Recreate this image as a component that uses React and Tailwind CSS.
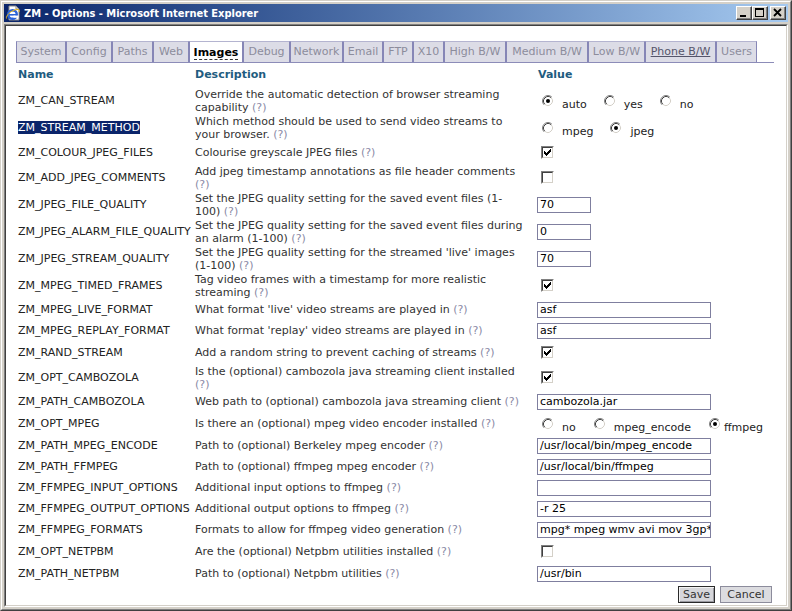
import React from 'react';

const F = "font-['DejaVu_Sans',Verdana,sans-serif]";

const tabs = [
  ['System', 'w-[50px]'],
  ['Config', 'w-[46px]'],
  ['Paths', 'w-[41px]'],
  ['Web', 'w-[36px]'],
  ['Images', 'w-[54px]', 'active'],
  ['Debug', 'w-[47px]'],
  ['Network', 'w-[53px]'],
  ['Email', 'w-[40px]'],
  ['FTP', 'w-[30px]'],
  ['X10', 'w-[31px]'],
  ['High B/W', 'w-[62px]'],
  ['Medium B/W', 'w-[82px]'],
  ['Low B/W', 'w-[57px]'],
  ['Phone B/W', 'w-[71px]', 'hover'],
  ['Users', 'w-[41px]'],
];

const rows = [
  { name: 'ZM_CAN_STREAM', h: 'h-[27px]', desc: ['Override the automatic detection of browser streaming', 'capability'], v: { t: 'radio', o: ['auto', 'yes', 'no'], s: 0 } },
  { name: 'ZM_STREAM_METHOD', sel: true, h: 'h-[27px]', desc: ['Which method should be used to send video streams to', 'your browser.'], v: { t: 'radio', o: ['mpeg', 'jpeg'], s: 1 } },
  { name: 'ZM_COLOUR_JPEG_FILES', h: 'h-[23px]', desc: ['Colourise greyscale JPEG files'], v: { t: 'check', on: true } },
  { name: 'ZM_ADD_JPEG_COMMENTS', h: 'h-[27px]', desc: ['Add jpeg timestamp annotations as file header comments', ''], v: { t: 'check', on: false } },
  { name: 'ZM_JPEG_FILE_QUALITY', h: 'h-[27px]', desc: ['Set the JPEG quality setting for the saved event files (1-', '100)'], v: { t: 'text', val: '70' } },
  { name: 'ZM_JPEG_ALARM_FILE_QUALITY', h: 'h-[27px]', desc: ['Set the JPEG quality setting for the saved event files during', 'an alarm (1-100)'], v: { t: 'text', val: '0' } },
  { name: 'ZM_JPEG_STREAM_QUALITY', h: 'h-[27px]', desc: ["Set the JPEG quality setting for the streamed 'live' images", '(1-100)'], v: { t: 'text', val: '70' } },
  { name: 'ZM_MPEG_TIMED_FRAMES', h: 'h-[27px]', desc: ['Tag video frames with a timestamp for more realistic', 'streaming'], v: { t: 'check', on: true } },
  { name: 'ZM_MPEG_LIVE_FORMAT', h: 'h-[21px]', desc: ["What format 'live' video streams are played in"], v: { t: 'wide', val: 'asf' } },
  { name: 'ZM_MPEG_REPLAY_FORMAT', h: 'h-[21px]', desc: ["What format 'replay' video streams are played in"], v: { t: 'wide', val: 'asf' } },
  { name: 'ZM_RAND_STREAM', h: 'h-[23px]', desc: ['Add a random string to prevent caching of streams'], v: { t: 'check', on: true } },
  { name: 'ZM_OPT_CAMBOZOLA', h: 'h-[27px]', desc: ['Is the (optional) cambozola java streaming client installed', ''], v: { t: 'check', on: true } },
  { name: 'ZM_PATH_CAMBOZOLA', h: 'h-[21px]', desc: ['Web path to (optional) cambozola java streaming client'], v: { t: 'wide', val: 'cambozola.jar' } },
  { name: 'ZM_OPT_MPEG', h: 'h-[23px]', desc: ['Is there an (optional) mpeg video encoder installed'], v: { t: 'radio', o: ['no', 'mpeg_encode', 'ffmpeg'], s: 2, tight: true } },
  { name: 'ZM_PATH_MPEG_ENCODE', h: 'h-[21px]', desc: ['Path to (optional) Berkeley mpeg encoder'], v: { t: 'wide', val: '/usr/local/bin/mpeg_encode' } },
  { name: 'ZM_PATH_FFMPEG', h: 'h-[21px]', desc: ['Path to (optional) ffmpeg mpeg encoder'], v: { t: 'wide', val: '/usr/local/bin/ffmpeg' } },
  { name: 'ZM_FFMPEG_INPUT_OPTIONS', h: 'h-[21px]', desc: ['Additional input options to ffmpeg'], v: { t: 'wide', val: '' } },
  { name: 'ZM_FFMPEG_OUTPUT_OPTIONS', h: 'h-[21px]', desc: ['Additional output options to ffmpeg'], v: { t: 'wide', val: '-r 25' } },
  { name: 'ZM_FFMPEG_FORMATS', h: 'h-[21px]', desc: ['Formats to allow for ffmpeg video generation'], v: { t: 'wide', val: 'mpg* mpeg wmv avi mov 3gp*' } },
  { name: 'ZM_OPT_NETPBM', h: 'h-[23px]', desc: ['Are the (optional) Netpbm utilities installed'], v: { t: 'check', on: false } },
  { name: 'ZM_PATH_NETPBM', h: 'h-[21px]', desc: ['Path to (optional) Netpbm utilities'], v: { t: 'wide', val: '/usr/bin' } },
];

function Radio({ on }) {
  return (
    <svg width="12" height="12" viewBox="0 0 12 12" className="shrink-0 mb-[3px]">
      <circle cx="6" cy="6" r="5" fill="#ffffff" />
      <path d="M2.11 9.89 A5.5 5.5 0 0 1 9.89 2.11" fill="none" stroke="#808080" />
      <path d="M9.89 2.11 A5.5 5.5 0 0 1 2.11 9.89" fill="none" stroke="#ffffff" />
      <path d="M2.82 9.18 A4.5 4.5 0 0 1 9.18 2.82" fill="none" stroke="#404040" />
      <path d="M9.18 2.82 A4.5 4.5 0 0 1 2.82 9.18" fill="none" stroke="#d4d0c8" />
      {on && <circle cx="6" cy="6" r="2" fill="#000000" />}
    </svg>
  );
}

function Check({ on }) {
  return (
    <div className="ml-[5px] w-[13px] h-[13px] border border-t-[#808080] border-l-[#808080] border-r-white border-b-white">
      <div className="w-full h-full border border-t-[#404040] border-l-[#404040] border-r-[#d4d0c8] border-b-[#d4d0c8] bg-white flex items-center justify-center">
        {on && (
          <svg width="7" height="7" viewBox="0 0 7 7" shapeRendering="crispEdges">
            <path
              d="M6 0h1v1h-1z M5 1h2v1h-2z M0 2h1v1h-1z M4 2h3v1h-3z M0 3h2v1h-2z M3 3h3v1h-3z M0 4h5v1h-5z M1 5h3v1h-3z M2 6h1v1h-1z"
              fill="#000000"
            />
          </svg>
        )}
      </div>
    </div>
  );
}

function TextIn({ val, wide }) {
  return (
    <div
      className={`${wide ? 'w-[174px]' : 'w-[54px]'} h-[16px] ml-[1px] border border-[#7f7f9f] bg-white px-[2px] text-[11px] leading-[14px] text-black whitespace-nowrap overflow-hidden`}
    >
      {val}
    </div>
  );
}

function Value({ v }) {
  if (v.t === 'check') return <Check on={v.on} />;
  if (v.t === 'text') return <TextIn val={v.val} />;
  if (v.t === 'wide') return <TextIn val={v.val} wide />;
  return (
    <div className="flex items-center pt-[4px] pl-[6px]">
      {v.o.map((o, i) => {
        const last = i === v.o.length - 1;
        return (
          <div key={o} className="flex items-center">
            <Radio on={v.s === i} />
            <span
              className={`${v.tight && last ? 'ml-[3px]' : 'ml-[8px]'} ${last ? '' : v.tight ? 'mr-[18px]' : 'mr-[17px]'} mt-[3px] leading-[13px] text-[#222]`}
            >
              {o}
            </span>
          </div>
        );
      })}
    </div>
  );
}

function IEIcon() {
  return (
    <svg width="16" height="16" viewBox="0 0 16 16">
      <path d="M4 1 H11 L14 4 V15 H4 Z" fill="#ffffff" stroke="#8c8c8c" strokeWidth="1" />
      <path d="M11 1 V4 H14" fill="none" stroke="#8c8c8c" strokeWidth="1" />
      <circle cx="7.5" cy="9.5" r="4.3" fill="none" stroke="#2a63d8" strokeWidth="2.4" />
      <rect x="3.5" y="9" width="8.5" height="1.6" fill="#2a63d8" />
      <rect x="8.5" y="10.6" width="5" height="2.2" fill="#ffffff" />
      <path d="M1.5 13.5 C 0.5 11 6 5 12 4.5 C 14.5 4.3 15 5.5 13.8 7" fill="none" stroke="#e8b418" strokeWidth="1" />
    </svg>
  );
}

function TitleBtn({ kind }) {
  return (
    <div className="w-[16px] h-[14px] bg-[#d4d0c8] border border-t-white border-l-white border-r-[#404040] border-b-[#404040] shadow-[inset_-1px_-1px_0_#808080] flex items-center justify-center">
      <svg width="14" height="12" viewBox="0 0 14 12" shapeRendering="crispEdges">
        {kind === 'min' && <rect x="3" y="8" width="6" height="2" fill="#000" />}
        {kind === 'max' && (
          <g fill="#000">
            <rect x="2" y="1" width="9" height="2" />
            <rect x="2" y="1" width="1" height="9" />
            <rect x="10" y="1" width="1" height="9" />
            <rect x="2" y="9" width="9" height="1" />
          </g>
        )}
        {kind === 'close' && (
          <path d="M3 2 L10 9 M10 2 L3 9" stroke="#000" strokeWidth="1.8" shapeRendering="auto" />
        )}
      </svg>
    </div>
  );
}

function Desc({ lines }) {
  return (
    <div className="pl-[2px] text-[#333] leading-[13px]">
      {lines.map((l, i) => {
        const last = i === lines.length - 1;
        return (
          <div key={i} className="whitespace-nowrap">
            {l}
            {last && (
              <span className="text-[#8a8aa6]">{l === '' ? '(?)' : ' (?)'}</span>
            )}
          </div>
        );
      })}
    </div>
  );
}

export default function App() {
  return (
    <div className={`w-[792px] h-[611px] bg-[#d4d0c8] border border-t-[#d4d0c8] border-l-[#d4d0c8] border-r-[#404040] border-b-[#404040] ${F}`}>
      <div className="w-full h-full border border-t-white border-l-white border-r-[#808080] border-b-[#808080] p-[2px] flex flex-col">
        {/* title bar */}
        <div className="h-[18px] flex items-center bg-gradient-to-r from-[#0a246a] to-[#a6caf0] pl-[1px] pr-[2px]">
          <IEIcon />
          <span className="ml-[3px] text-white font-bold text-[11px] leading-[13px] whitespace-nowrap font-['DejaVu_Sans_Condensed','DejaVu_Sans',sans-serif]">
            ZM - Options - Microsoft Internet Explorer
          </span>
          <div className="ml-auto flex items-center">
            <TitleBtn kind="min" />
            <TitleBtn kind="max" />
            <div className="ml-[2px]">
              <TitleBtn kind="close" />
            </div>
          </div>
        </div>

        {/* client area */}
        <div className="mt-[2px] flex-1 border border-t-[#808080] border-l-[#808080] border-r-white border-b-white">
          <div className="w-full h-full border border-t-[#404040] border-l-[#404040] border-r-[#d4d0c8] border-b-[#d4d0c8] bg-white pl-[10px] pt-[15px] text-[11px]">
            {/* tabs */}
            <div className="flex w-[758px] h-[22px] border-b border-[#8c8cb8]">
              {tabs.map(([label, w, st]) => (
                <div
                  key={label}
                  className={`${w} h-[21px] border-t border-l border-r border-t-[#b4b4d0] border-l-[#8686b6] border-r-[#8686b6] flex items-center justify-center whitespace-nowrap ${
                    st === 'active' ? 'bg-white text-black font-bold' : 'bg-[#dcdce6] text-[#8c8c9c]'
                  }`}
                >
                  {st === 'active' ? (
                    <span className="border-b border-dashed border-[#333] leading-[13px] mt-[2px]">{label}</span>
                  ) : st === 'hover' ? (
                    <span className="underline text-[#55556a]">{label}</span>
                  ) : (
                    <span>{label}</span>
                  )}
                </div>
              ))}
            </div>

            {/* header */}
            <div className="grid grid-cols-[177px_343px_238px] h-[24px] pt-[1px] items-center font-bold text-[#1f5c80]">
              <div className="pl-[2px]">Name</div>
              <div className="pl-[2px]">Description</div>
              <div className="pl-[2px]">Value</div>
            </div>

            {rows.map((r) => (
              <div key={r.name} className={`grid grid-cols-[177px_343px_238px] ${r.h} items-center`}>
                <div className="pl-[2px] whitespace-nowrap text-[#222] leading-[13px]">
                  {r.sel ? <span className="bg-[#0a246a] text-white">{r.name}</span> : r.name}
                </div>
                <Desc lines={r.desc} />
                <div className="flex items-center">
                  <Value v={r.v} />
                </div>
              </div>
            ))}

            {/* buttons */}
            <div className="w-[758px] flex justify-end gap-[5px] pr-[2px] mt-[2px]">
              <div className="w-[37px] h-[17px] border border-[#2a2a2a] bg-[#d6d6da] shadow-[inset_1px_1px_0_#f4f4f4,inset_-1px_-1px_0_#9a9aa0] flex items-center justify-center text-[#333] leading-[13px]">
                Save
              </div>
              <div className="w-[52px] h-[17px] border border-[#8c8c9c] bg-[#dcdce0] flex items-center justify-center text-[#333] leading-[13px]">
                Cancel
              </div>
            </div>
          </div>
        </div>
      </div>
    </div>
  );
}
